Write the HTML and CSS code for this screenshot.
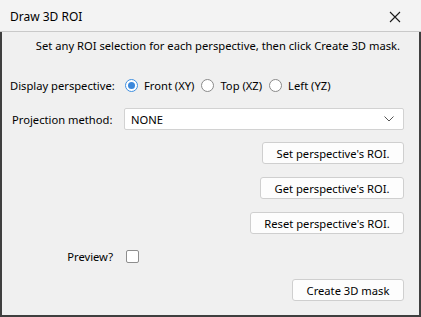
FILE: index.html
```html
<!DOCTYPE html>
<html lang="en">
<head>
    <meta charset="UTF-8">
    <meta name="viewport" content="width=device-width, initial-scale=1.0">
    <title>Draw 3D ROI</title>
    <link rel="stylesheet" href="styles.css">
</head>
<body>
    <div class="window">
        <div class="titlebar">
            <span class="title">Draw 3D ROI</span>
            <svg class="close" width="12" height="12" viewBox="0 0 12 12">
                <path d="M1 1 L11 11 M11 1 L1 11" stroke="#1a1a1a" stroke-width="1.1" fill="none"/>
            </svg>
        </div>

        <div class="content">
            <p class="instructions">Set any ROI selection for each perspective, then click Create 3D mask.</p>

            <div class="row perspective-row">
                <span class="label">Display perspective:</span>
                <label class="radio"><span class="radio-dot checked"></span>Front (XY)</label>
                <label class="radio"><span class="radio-dot"></span>Top (XZ)</label>
                <label class="radio"><span class="radio-dot"></span>Left (YZ)</label>
            </div>

            <div class="row projection-row">
                <span class="label">Projection method:</span>
                <div class="select">
                    <span>NONE</span>
                    <svg width="10" height="6" viewBox="0 0 10 6">
                        <path d="M0.5 0.5 L5 5 L9.5 0.5" stroke="#555" stroke-width="1" fill="none"/>
                    </svg>
                </div>
            </div>

            <div class="actions">
                <button class="btn btn-set">Set perspective's ROI.</button>
                <button class="btn btn-get">Get perspective's ROI.</button>
                <button class="btn btn-reset">Reset perspective's ROI.</button>
            </div>

            <div class="row preview-row">
                <span class="preview-label">Preview?</span>
                <span class="checkbox"></span>
            </div>

            <div class="actions">
                <button class="btn btn-create">Create 3D mask</button>
            </div>
        </div>
    </div>
</body>
</html>
```

FILE: styles.css
```css
body {
    margin: 0;
    padding: 0;
    font-family: "Noto Sans", "Open Sans", sans-serif;
    font-size: 11.2px;
    color: #000;
    background: #f0f0f0;
}

.window {
    width: 421px;
    height: 317px;
    box-sizing: border-box;
    display: flex;
    flex-direction: column;
}

.titlebar {
    height: 31px;
    flex-shrink: 0;
    display: flex;
    align-items: center;
    justify-content: space-between;
    padding: 0 20px 0 10px;
    background: #f3f3f3;
    border-bottom: 1px solid #c9c9c9;
}

.title {
    font-size: 12px;
    margin-top: 2px;
}

.close {
    display: block;
    margin-top: 2px;
}

.content {
    flex: 1;
    background: #f0f0f0;
    border: 2px solid #3f3f3f;
    border-top: none;
    padding: 0 15px 0 8px;
}

.instructions {
    margin: 6px 0 0;
    height: 16px;
    line-height: 16px;
    text-align: right;
    padding-right: 4px;
    white-space: nowrap;
}

.row {
    display: flex;
    align-items: center;
    white-space: nowrap;
}

.perspective-row {
    margin-top: 21px;
    height: 20px;
}

.label {
    width: 115px;
    flex-shrink: 0;
}

.radio {
    display: flex;
    align-items: center;
    margin-right: 7px;
}

.radio-dot {
    width: 13px;
    height: 13px;
    box-sizing: border-box;
    border: 1px solid #8a8a8a;
    border-radius: 50%;
    background: #fff;
    margin-right: 6px;
    position: relative;
}

.radio-dot.checked {
    border-color: #3f8fe0;
}

.radio-dot.checked::after {
    content: "";
    position: absolute;
    left: 2px;
    top: 2px;
    width: 7px;
    height: 7px;
    border-radius: 50%;
    background: #3c88db;
}

.projection-row {
    margin-top: 13px;
}

.projection-row .label {
    padding-left: 2px;
    width: 112px;
}

.select {
    flex: 1;
    height: 22px;
    box-sizing: border-box;
    border: 1px solid #d2d2d2;
    border-radius: 2px;
    background: #fff;
    display: flex;
    align-items: center;
    justify-content: space-between;
    padding: 0 9px 0 6px;
}

.actions {
    display: flex;
    flex-direction: column;
    align-items: flex-end;
    gap: 13px;
    margin-top: 12px;
}

.btn {
    height: 22px;
    box-sizing: border-box;
    border: 1px solid #cfcfcf;
    border-radius: 3px;
    background: #fdfdfd;
    font-family: inherit;
    font-size: 11.2px;
    color: #000;
    padding: 0;
    white-space: nowrap;
}

.btn-set { width: 142px; }
.btn-get { width: 144px; }
.btn-reset { width: 154px; }

.preview-row {
    margin-top: 15px;
    height: 14px;
}

.preview-label {
    width: 103px;
    text-align: right;
    margin-right: 13px;
}

.checkbox {
    width: 13px;
    height: 13px;
    box-sizing: border-box;
    border: 1px solid #8e8e8e;
    border-radius: 2px;
    background: #fff;
}

.preview-row + .actions {
    margin-top: 16px;
}

.btn-create { width: 112px; }
```
